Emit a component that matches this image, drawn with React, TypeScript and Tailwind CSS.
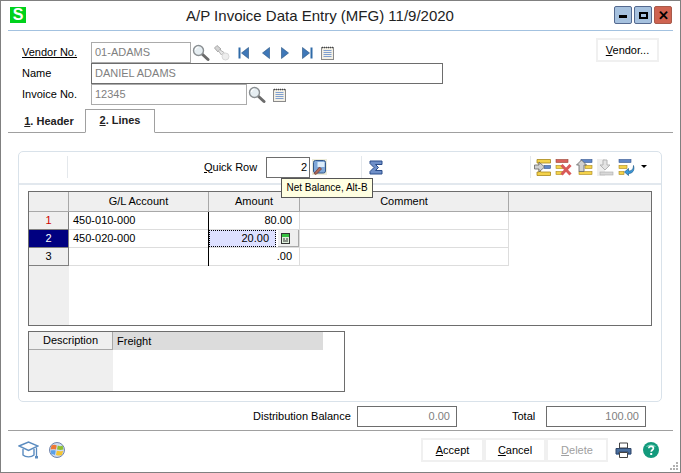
import type { ReactNode } from 'react';

const Magnifier = () => (
  <svg width="18" height="18" viewBox="0 0 18 18" className="shrink-0">
    <path d="M9.5 9.5L16 15.5" stroke="#6b6b6b" strokeWidth="3" strokeLinecap="round" />
    <circle cx="6.5" cy="6.5" r="5" fill="#e6eef2" stroke="#8a8f92" strokeWidth="1.4" />
    <path d="M3.5 6a3 3 0 0 1 3-3" stroke="#fff" strokeWidth="1.2" fill="none" />
  </svg>
);

const Flashlight = () => (
  <svg width="18" height="18" viewBox="0 0 18 18" className="shrink-0">
    <path d="M1.5 4L4 1.5L8 5L5 8Z" fill="#d4d4d4" stroke="#a8a8a8" />
    <path d="M6.5 5.5L11 8.5L8.5 11L5.5 7Z" fill="#e8e8e8" stroke="#b4b4b4" />
    <circle cx="12.5" cy="12.5" r="3.5" fill="#ededed" stroke="#d8d8d8" />
  </svg>
);

const Nav = ({ dir, bar }: { dir: 'l' | 'r'; bar?: boolean }) => (
  <svg width="12" height="12" viewBox="0 0 12 12" className="shrink-0">
    {dir === 'l' ? (
      <>
        {bar && <rect x="0.5" y="0.5" width="2" height="11" fill="#2f6aa8" />}
        <path d="M10.5 0.5V11.5L3.5 6Z" fill="#3f78b8" stroke="#24507f" strokeWidth="0.6" />
      </>
    ) : (
      <>
        <path d="M1.5 0.5V11.5L8.5 6Z" fill="#3f78b8" stroke="#24507f" strokeWidth="0.6" />
        {bar && <rect x="9.5" y="0.5" width="2" height="11" fill="#2f6aa8" />}
      </>
    )}
  </svg>
);

const Notepad = () => (
  <svg width="13" height="14" viewBox="0 0 13 14" className="shrink-0">
    <rect x="0.5" y="1.5" width="12" height="12" fill="#f3f0e6" stroke="#8a8a8a" />
    <path d="M1 1.5H12" stroke="#444" strokeWidth="1.4" strokeDasharray="1 1" />
    <path d="M2.5 4.5H10.5M2.5 6.5H10.5M2.5 8.5H10.5M2.5 10.5H10.5" stroke="#7f9fd0" />
  </svg>
);

const InsertRow = () => (
  <svg width="17" height="17" viewBox="0 0 17 17" className="shrink-0">
    <path d="M3 0.5H16.5V4H6.5V13H16.5V16.5H3V13H5V4H3Z" fill="#f4d24a" stroke="#a8861a" strokeWidth="0.8" />
    <rect x="10" y="6.5" width="6.5" height="3" fill="#5f86c8" stroke="#35558f" strokeWidth="0.6" />
    <path d="M0.5 6H5V3L10.5 8L5 13V10H0.5Z" fill="#d0d0d0" stroke="#666" strokeWidth="0.8" />
  </svg>
);

const DeleteRow = () => (
  <svg width="17" height="17" viewBox="0 0 17 17" className="shrink-0">
    <rect x="1" y="0.5" width="12" height="3" fill="#d9605c" stroke="#943" strokeWidth="0.6" />
    <rect x="1" y="6.5" width="7" height="3" fill="#f4d24a" stroke="#a8861a" strokeWidth="0.6" />
    <rect x="1" y="12.5" width="7" height="3" fill="#f4d24a" stroke="#a8861a" strokeWidth="0.6" />
    <path d="M6.5 6L15.5 15.5M15.5 6L6.5 15.5" stroke="#d85a5a" strokeWidth="3" />
  </svg>
);

const MoveUp = ({ off }: { off?: boolean }) => (
  <svg width="17" height="17" viewBox="0 0 17 17" className="shrink-0">
    {off ? (
      <>
        <rect x="0" y="0" width="8" height="17" fill="#eeeeee" />
        <path d="M6 1H10V6H13L8 11L3 6H6Z" fill="#e4e4e4" stroke="#b4b4b4" />
        <rect x="3" y="13" width="13" height="3" fill="#d8d8d8" stroke="#aaa" strokeWidth="0.6" />
      </>
    ) : (
      <>
        <rect x="5" y="0.5" width="11" height="3" fill="#5f86c8" stroke="#35558f" strokeWidth="0.6" />
        <rect x="9" y="6.5" width="7" height="3" fill="#f4d24a" stroke="#a8861a" strokeWidth="0.6" />
        <rect x="3" y="12.5" width="13" height="3" fill="#f4d24a" stroke="#a8861a" strokeWidth="0.6" />
        <path d="M5.5 1L10.5 6H8V12.5H3V6H0.5Z" fill="#d0d0d0" stroke="#666" strokeWidth="0.8" />
      </>
    )}
  </svg>
);

const Wrap = () => (
  <svg width="17" height="17" viewBox="0 0 17 17" className="shrink-0">
    <rect x="1" y="0.5" width="12" height="3" fill="#5f86c8" stroke="#35558f" strokeWidth="0.6" />
    <rect x="1" y="6.5" width="8" height="3" fill="#f4d24a" stroke="#a8861a" strokeWidth="0.6" />
    <rect x="1" y="12.5" width="5" height="3" fill="#f4d24a" stroke="#a8861a" strokeWidth="0.6" />
    <path d="M15.5 6.5C15.5 11 13 12 10.5 12V9.5L6.5 13L10.5 16.5V14.5C14 14.5 17 12 15.5 6.5Z" fill="#3a98d8" stroke="#1f5f90" strokeWidth="0.7" />
  </svg>
);

const Sigma = () => (
  <svg width="14" height="15" viewBox="0 0 14 15" className="shrink-0">
    <path d="M1 1H13V4.5H6.5L9.5 7.5L6.5 10.5H13V14H1V11.5L5 7.5L1 3.5Z" fill="#6f8fc8" stroke="#2a4c8a" strokeWidth="1" />
  </svg>
);

const NetBalance = () => (
  <svg width="15" height="16" viewBox="0 0 15 16" className="shrink-0">
    <rect x="0" y="0" width="15" height="16" fill="#ecebd8" />
    <rect x="1.5" y="1.5" width="12" height="12.5" rx="2" fill="#7fa8d8" stroke="#33588a" />
    <rect x="5.5" y="3" width="7" height="5" fill="#dcedfb" />
    <path d="M2 14.5L7.5 8L9.5 10L4 15.5Z" fill="#b06a58" stroke="#6b3a32" strokeWidth="0.7" />
  </svg>
);

const CellCalc = () => (
  <svg width="9" height="11" viewBox="0 0 9 11">
    <rect x="0.5" y="0.5" width="8" height="10" fill="#dff0dc" stroke="#333" />
    <rect x="1" y="1" width="7" height="3" fill="#35c040" />
    <path d="M2 6H4M5 6H7M2 8H7" stroke="#333" />
  </svg>
);

const Cap = () => (
  <svg width="21" height="18" viewBox="0 0 21 18" className="shrink-0">
    <path d="M5 8V14C7.5 16.5 13.5 16.5 16 14V8" fill="#fff" stroke="#5b8cc0" strokeWidth="1.4" />
    <path d="M1 5L10.5 1L20 5L10.5 9.5Z" fill="#fff" stroke="#5b8cc0" strokeWidth="1.4" />
    <path d="M18.5 6.5V15" stroke="#5b8cc0" strokeWidth="1.3" />
    <rect x="17" y="15" width="3" height="2.5" fill="#5b8cc0" />
  </svg>
);

const Ball = () => (
  <svg width="16" height="16" viewBox="0 0 16 16" className="shrink-0">
    <circle cx="8" cy="8" r="7.5" fill="#cfdcf0" stroke="#6f83ac" />
    <path d="M2.5 3.6C4.5 2.4 6 2.4 7.8 3.4L6.9 7.6C5 7 3.6 7 1.6 7.6Z" fill="#ee7733" />
    <path d="M8.8 3.4C10.5 4.4 12 4.4 13.6 3.4L14.4 7.6C12.4 8.2 10.5 8.2 8 7.6Z" fill="#8fc030" />
    <path d="M1.6 8.6C3.6 8 5 8 6.7 8.6L6 13C4.5 12.2 3.4 12.2 2.4 12.6Z" fill="#5aa0e8" />
    <path d="M7.8 8.8C10 9.4 12 9.4 14.2 8.7L13 13C11 13.8 9.5 13.8 7 13Z" fill="#f4c430" />
  </svg>
);

const Printer = () => (
  <svg width="17" height="17" viewBox="0 0 17 17" className="shrink-0">
    <path d="M4.5 1H12.5V6H4.5Z" fill="#fff" stroke="#444" />
    <path d="M1 6.5H16V12H13V10H4V12H1Z" fill="#4a6f9e" stroke="#2f4566" />
    <path d="M4.5 10.5H12.5V15.5H4.5Z" fill="#fff" stroke="#444" />
    <path d="M1 12.5H4M13 12.5H16" stroke="#6f8db5" />
  </svg>
);

const Help = () => (
  <svg width="16" height="16" viewBox="0 0 16 16" className="shrink-0">
    <circle cx="8" cy="8" r="8" fill="#139a7c" />
    <path d="M3 5C4.5 2 11 1.5 13 5C10 4 6 4 3 5Z" fill="#6fd0b8" />
    <path d="M5.8 6.2C5.8 3.8 10.4 3.9 10.4 6.2C10.4 8 8.2 8 8.2 9.8" fill="none" stroke="#fff" strokeWidth="1.7" />
    <rect x="7.2" y="11" width="2" height="2" fill="#fff" />
  </svg>
);

const WinBtn = ({ children, red }: { children: ReactNode; red?: boolean }) => (
  <div
    className={`flex h-[18px] w-[18px] items-center justify-center rounded-[2px] border ${
      red ? 'border-[#a85a4a] bg-[#cf6350]' : 'border-[#54698f] bg-[#a6c1de]'
    }`}
  >
    {children}
  </div>
);

const Field = ({ w, value, dark }: { w: string; value: string; dark?: boolean }) => (
  <div className={`flex h-[21px] items-center border pl-[3px] text-[#808080] ${w} ${dark ? 'border-[#6d6d6d]' : 'border-[#ababab]'}`}>
    {value}
  </div>
);

const Btn = ({ hot, rest, off, w }: { hot: string; rest: string; off?: boolean; w: string }) => (
  <div className={`flex h-[24px] items-center justify-center border-2 border-[#f0f0f0] ${w} ${off ? 'text-[#a0a0a0]' : 'text-black'}`}>
    <span>
      <u>{hot}</u>
      {rest}
    </span>
  </div>
);

const Row = ({ n, gl, amount, active }: { n: string; gl?: string; amount: string; active?: boolean }) => (
  <div className="flex h-[18px]">
    <div
      className={`flex w-[40px] items-center justify-center border-r border-b border-[#808080] ${
        active ? 'bg-[#000080] text-white' : 'bg-[#efefef]'
      } ${n === '1' ? 'text-[#d00000]' : ''}`}
    >
      {n}
    </div>
    <div className="flex w-[139px] items-center border-b border-[#dddddd] pl-[4px]">{gl}</div>
    <div className="w-[1px] bg-black" />
    {active ? (
      <div className="flex w-[91px] border-r border-b border-[#dddddd]">
        <div className="flex w-[67px] items-center justify-end border border-dotted border-black bg-[#dde0ff] pr-[6px]">{amount}</div>
        <div className="ml-[2px] flex w-[21px] items-center justify-start border-r border-b border-[#a8a8a8] bg-[#efefef] pl-[3px]">
          <CellCalc />
        </div>
      </div>
    ) : (
      <div className="flex w-[91px] items-center justify-end border-r border-b border-[#dddddd] pr-[7px]">{amount}</div>
    )}
    <div className="w-[209px] border-r border-b border-[#dddddd]" />
  </div>
);

export default function App() {
  return (
    <div className="relative flex h-[473px] w-[681px] flex-col overflow-hidden border border-[#808080] bg-white text-[11px] leading-none text-black [font-family:'Liberation_Sans',sans-serif]">
      {/* Title bar */}
      <div className="mx-[7px] flex h-[30px] shrink-0 items-center border-b border-[#a3c2e0] pb-[1px]">
        <div className="ml-[2px] flex h-[16px] w-[16px] items-center justify-center bg-[#00d21c] text-[16px] font-bold text-white">S</div>
        <div className="flex-1 text-center text-[15px] text-[#222]">A/P Invoice Data Entry (MFG) 11/9/2020</div>
        <div className="mr-[1px] flex gap-[2px]">
          <WinBtn><div className="mt-[3px] h-[3px] w-[8px] bg-black" /></WinBtn>
          <WinBtn><div className="h-[7px] w-[9px] border-2 border-black" /></WinBtn>
          <WinBtn red><span className="text-[13px] font-bold">✕</span></WinBtn>
        </div>
      </div>

      {/* Vendor header */}
      <div className="flex shrink-0 pt-[7px] pr-[21px] pl-[21px]">
        <div className="mt-[4px] flex flex-col gap-0">
          <div className="flex h-[21px] items-center">
            <div className="w-[69px] underline">Vendor No.</div>
            <Field w="w-[100px]" value="01-ADAMS" />
            <div className="ml-[1px] flex items-center">
              <Magnifier />
              <div className="ml-[3px]"><Flashlight /></div>
              <div className="ml-[7px] flex items-center gap-[9px]">
                <Nav dir="l" bar />
                <Nav dir="l" />
                <Nav dir="r" />
                <Nav dir="r" bar />
              </div>
              <div className="ml-[8px]"><Notepad /></div>
            </div>
          </div>
          <div className="flex h-[21px] items-center">
            <div className="w-[69px]">Name</div>
            <Field w="w-[352px]" value="DANIEL ADAMS" dark />
          </div>
          <div className="flex h-[21px] items-center">
            <div className="w-[69px]">Invoice No.</div>
            <Field w="w-[156px]" value="12345" />
            <div className="ml-[1px] flex items-center">
              <Magnifier />
              <div className="ml-[7px]"><Notepad /></div>
            </div>
          </div>
        </div>
        <div className="ml-auto flex h-[24px] w-[63px] items-center justify-center border-2 border-[#f0f0f0]">
          <span><u>V</u>endor...</span>
        </div>
      </div>

      {/* Tabs */}
      <div className="mx-[7px] flex h-[28px] shrink-0 items-end border-b border-[#a0a0a0]">
        <div className="flex h-[22px] w-[77px] items-center justify-center pl-[5px] font-bold text-[#222]"><span><u>1</u>. Header</span></div>
        <div className="-mb-px flex h-[24px] w-[70px] items-start justify-center border border-[#a0a0a0] border-b-white bg-white pt-[5px] font-bold text-[#222]"><span><u>2</u>. Lines</span></div>
      </div>

      {/* Lines panel */}
      <div className="mx-[17px] mt-[18px] flex h-[251px] w-[644px] shrink-0 flex-col rounded-[5px] border border-[#d9e2ea]">
        <div className="flex h-[33px] shrink-0 items-center border-b-2 border-[#e2e8ee] pb-[1px]">
          <div className="ml-[48px] h-[22px] w-[1px] bg-[#e4e8ec]" />
          <div className="ml-[136px] w-[62px]"><u>Q</u>uick Row</div>
          <div className="flex h-[21px] w-[44px] items-center justify-end border border-[#6d6d6d] pr-[2px]">2</div>
          <div className="ml-[2px]"><NetBalance /></div>
          <div className="ml-[34px] h-[22px] w-[1px] bg-[#e4e8ec]" />
          <div className="ml-[7px]"><Sigma /></div>
          <div className="ml-[147px] h-[22px] w-[1px] bg-[#e4e8ec]" />
          <div className="ml-[3px] flex items-center gap-[4px]">
            <InsertRow />
            <DeleteRow />
            <MoveUp />
            <MoveUp off />
            <Wrap />
          </div>
          <div className="mt-[-2px] ml-[6px] h-0 w-0 border-x-[3px] border-t-[3px] border-x-transparent border-t-black" />
        </div>

        {/* Distribution grid */}
        <div className="mx-[9px] mt-[6px] flex h-[135px] shrink-0 flex-col border border-[#6d6d6d]">
          <div className="flex h-[20px] shrink-0">
            <div className="w-[40px] border-r border-b border-[#a8a8a8] bg-[#efefef]" />
            <div className="flex w-[140px] items-center justify-center border-r border-b border-[#a8a8a8] bg-[#efefef]">G/L Account</div>
            <div className="flex w-[91px] items-center justify-center border-r border-b border-[#a8a8a8] bg-[#efefef]">Amount</div>
            <div className="flex w-[209px] items-center justify-center border-r border-b border-[#a8a8a8] bg-[#efefef]">Comment</div>
            <div className="flex-1 border-b border-[#a8a8a8] bg-[#efefef]" />
          </div>
          <Row n="1" gl="450-010-000" amount="80.00" />
          <Row n="2" gl="450-020-000" amount="20.00" active />
          <Row n="3" amount=".00" />
          <div className="w-[40px] flex-1 bg-[#efefef]" />
        </div>

        {/* Description */}
        <div className="mx-[9px] mt-[5px] flex h-[61px] w-[317px] shrink-0 flex-col border border-[#6d6d6d]">
          <div className="flex h-[18px] shrink-0">
            <div className="flex w-[84px] items-center justify-center border-r border-b border-[#a8a8a8] bg-[#efefef]">Description</div>
            <div className="flex w-[210px] items-center bg-[#dcdcdc] pl-[4px]">Freight</div>
          </div>
          <div className="w-[84px] flex-1 bg-[#efefef]" />
        </div>
      </div>

      {/* Totals */}
      <div className="flex h-[28px] shrink-0 items-start pt-[4px]">
        <div className="ml-[252px] flex h-[21px] w-[104px] items-center whitespace-nowrap">Distribution Balance</div>
        <div className="flex h-[21px] w-[100px] items-center justify-end border border-[#6d6d6d] pr-[6px] text-[#808080]">0.00</div>
        <div className="ml-[55px] flex h-[21px] w-[34px] items-center">Total</div>
        <div className="flex h-[21px] w-[100px] items-center justify-end border border-[#6d6d6d] pr-[6px] text-[#808080]">100.00</div>
      </div>

      {/* Footer */}
      <div className="mx-[7px] flex flex-1 items-center border-t border-[#a0a0a0] pb-[3px]">
        <div className="ml-[10px]"><Cap /></div>
        <div className="ml-[10px]"><Ball /></div>
        <div className="ml-[356px] flex">
          <Btn w="w-[63px]" hot="A" rest="ccept" />
          <Btn w="w-[62px]" hot="C" rest="ancel" />
          <Btn w="w-[62px]" hot="D" rest="elete" off />
        </div>
        <div className="ml-[7px]"><Printer /></div>
        <div className="ml-[11px]"><Help /></div>
      </div>
      <div className="absolute right-[2px] bottom-[2px] grid grid-cols-3 gap-[1px]">
        {[0, 1, 2, 3, 4, 5, 6, 7, 8].map((i) => (
          <div key={i} className={`h-[2px] w-[2px] ${[0, 1, 3].includes(i) ? '' : 'bg-[#b0b0b0]'}`} />
        ))}
      </div>

      {/* Tooltip */}
      <div className="absolute top-[177px] left-[280px] flex h-[20px] w-[92px] items-center justify-center border border-[#555] bg-[#ffffe1] text-[10px] whitespace-nowrap">
        Net Balance, Alt-B
      </div>
    </div>
  );
}
